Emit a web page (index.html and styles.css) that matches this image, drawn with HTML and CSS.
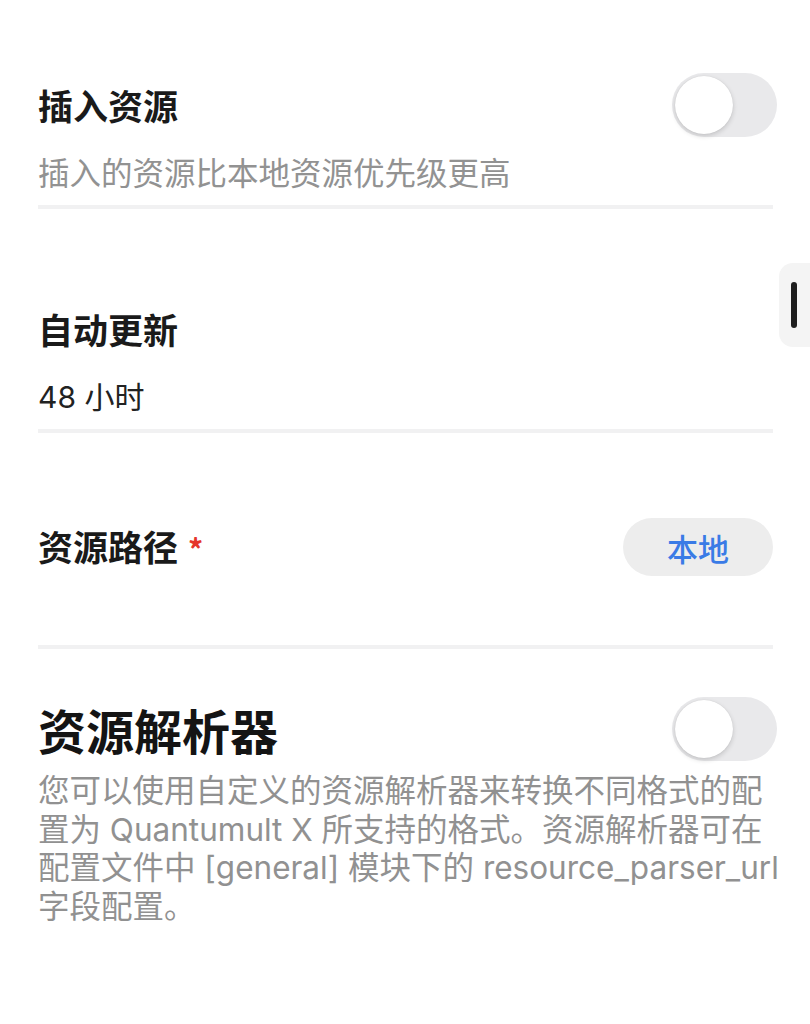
FILE: index.html
```html
<!DOCTYPE html>
<html lang="zh-CN">
<head>
<meta charset="utf-8">
<title>资源设置</title>
<link rel="stylesheet" href="styles.css">
</head>
<body>
<main class="page">
  <section class="section s-insert">
    <div class="row row-toggle">
      <h2 class="title">插入资源</h2>
      <span class="toggle"><span class="knob"></span></span>
    </div>
    <p class="hint">插入的资源比本地资源优先级更高</p>
  </section>

  <section class="section s-update">
    <h2 class="title title-line">自动更新</h2>
    <p class="value">48 小时</p>
  </section>

  <section class="section s-path">
    <div class="row row-pill">
      <h2 class="title">资源路径 <span class="req">*</span></h2>
      <button class="pill">本地</button>
    </div>
  </section>

  <section class="section s-parser">
    <div class="row row-toggle">
      <h1 class="big-title">资源解析器</h1>
      <span class="toggle"><span class="knob"></span></span>
    </div>
    <p class="desc">您可以使用自定义的资源解析器来转换不同格式的配<br>置为 Quantumult X 所支持的格式。资源解析器可在<br>配置文件中 [general] 模块下的 resource_parser_url<br>字段配置。</p>
  </section>

  <div class="scroll-grip"><span class="grip-bar"></span></div>
</main>
</body>
</html>
```
FILE: styles.css
```css
* { box-sizing: border-box; }
html, body {
  margin: 0;
  padding: 0;
  background: #ffffff;
}
body {
  width: 810px;
  height: 1024px;
  overflow: hidden;
  font-family: "Inter", "Noto Sans CJK SC", sans-serif;
  color: #1c1c1e;
}
.page {
  position: relative;
  padding: 0 37px 0 38px;
  height: 1024px;
}
.section {
  border-bottom: 4px solid #f1f1f2;
}
.row {
  display: flex;
  align-items: center;
  justify-content: space-between;
}
.title {
  margin: 0;
  font-size: 35px;
  line-height: 50px;
  font-weight: 700;
  color: #1a1a1a;
  font-family: "Noto Sans CJK SC", sans-serif;
}
.big-title {
  margin: 0;
  font-size: 48px;
  line-height: 64px;
  font-weight: 700;
  color: #141414;
  font-family: "Noto Sans CJK SC", sans-serif;
}
.req {
  color: #e5352b;
  font-size: 30px;
  margin-left: 2px;
}
.toggle {
  position: relative;
  width: 105px;
  height: 64px;
  border-radius: 32px;
  background: #e9e9eb;
  margin-right: -4px;
  flex: none;
}
.knob {
  position: absolute;
  left: 3px;
  top: 3px;
  width: 58px;
  height: 58px;
  border-radius: 50%;
  background: #ffffff;
  box-shadow: 0 2px 5px rgba(0,0,0,0.16), 0 0 1px rgba(0,0,0,0.12);
}
.s-insert { padding-top: 73px; padding-bottom: 14px; }
.hint {
  margin: 14px 0 0;
  font-size: 31.5px;
  line-height: 40px;
  color: #929292;
  font-family: "Noto Sans CJK SC", sans-serif;
}
.s-update { padding-top: 95px; padding-bottom: 12px; }
.value {
  margin: 23px 0 0;
  font-size: 30px;
  line-height: 40px;
  color: #222222;
}
.s-path { padding-top: 85px; padding-bottom: 69px; }
.row-pill { height: 58px; }
.pill {
  width: 150px;
  height: 58px;
  border: none;
  border-radius: 29px;
  background: #ededed;
  color: #3a7be6;
  font-family: "Noto Sans CJK SC", sans-serif;
  font-size: 31px;
  font-weight: 500;
  padding: 0;
}
.s-parser { padding-top: 48px; border-bottom: none; }
.desc {
  margin: 11px 0 0;
  font-size: 31.5px;
  line-height: 38.5px;
  color: #919191;
  white-space: nowrap;
}
.scroll-grip {
  position: absolute;
  right: 0;
  top: 263px;
  width: 31px;
  height: 84px;
  background: #f4f4f4;
  border-radius: 14px 0 0 14px;
}
.grip-bar {
  position: absolute;
  left: 12px;
  top: 19px;
  width: 6px;
  height: 46px;
  border-radius: 3px;
  background: #1e1e1e;
}
```
